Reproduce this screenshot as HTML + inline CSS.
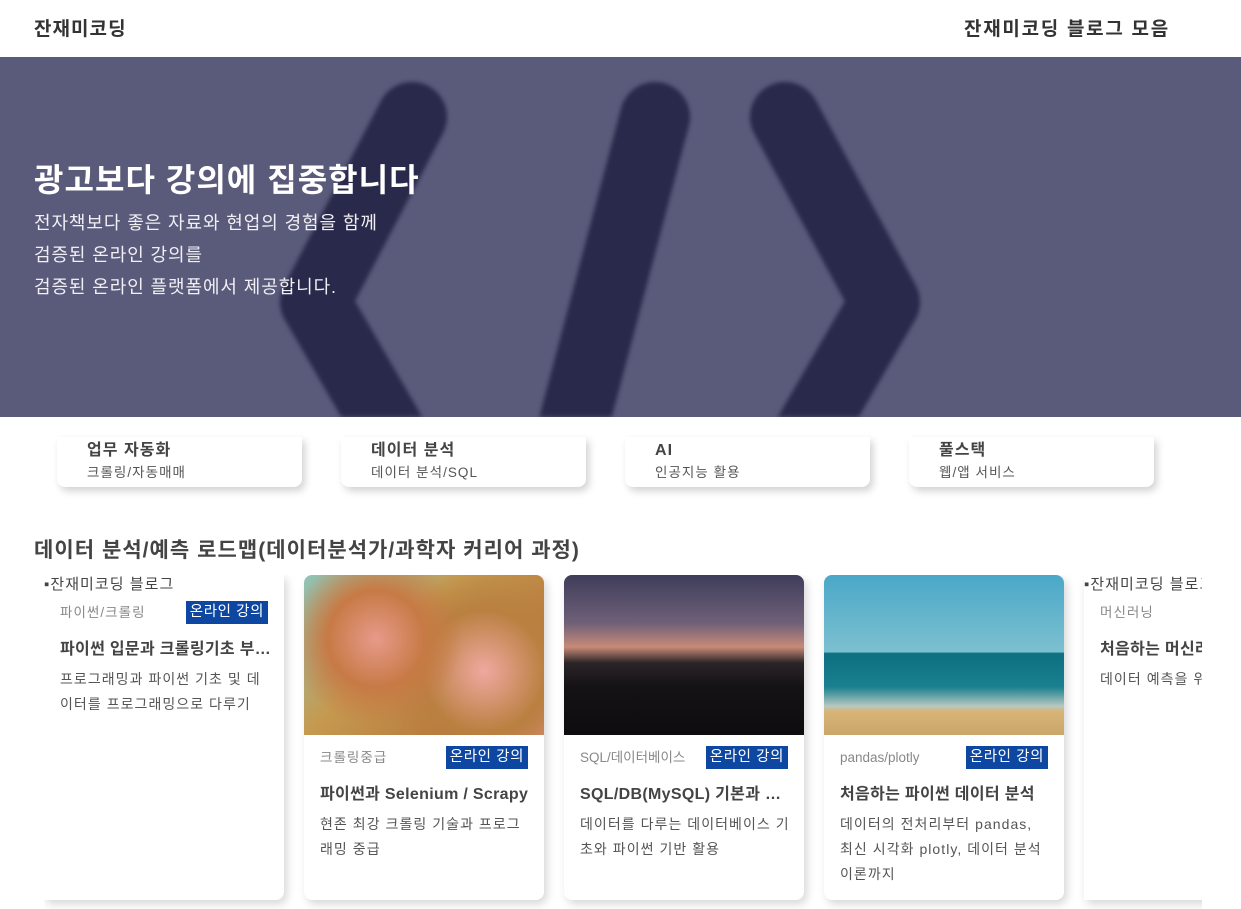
<!DOCTYPE html>
<html><head><meta charset="utf-8">
<style>
*{margin:0;padding:0;box-sizing:border-box}
body{width:1241px;height:909px;overflow:hidden;background:#fff;font-family:"Liberation Sans","Noto Sans CJK KR",sans-serif;color:#333;letter-spacing:0.065em}
.top{height:57px;position:relative}
.top .l{position:absolute;left:34px;top:14px;font-size:19px;font-weight:bold;color:#333}
.top .r{position:absolute;left:964px;top:14px;font-size:19px;font-weight:bold;color:#333;letter-spacing:0.09em}
.hero{position:absolute;top:57px;left:0;width:1241px;height:360px;background:#5a5a7b;overflow:hidden}
.hero svg{filter:blur(2px)}
.hero h1{position:absolute;left:34px;top:98px;font-size:32px;color:#fff;font-weight:bold}
.hero p{position:absolute;left:34px;top:150px;font-size:18px;color:#f0f0f4;line-height:32px;letter-spacing:0.05em}
.cat{position:absolute;top:437px;width:245px;height:50px;background:#fff;border-radius:0 0 8px 8px;box-shadow:3px 4px 8px rgba(0,0,0,.18)}
.cat b{position:absolute;left:30px;top:3px;font-size:16px;color:#444;line-height:22px}
.cat span{position:absolute;left:30px;top:26px;font-size:13.5px;color:#555;line-height:20px}
h2{position:absolute;left:34px;top:534px;font-size:21px;color:#444;font-weight:bold}
.wrap{position:absolute;left:44px;top:575px;width:1158px;height:334px;overflow:hidden}
.card{position:absolute;top:0;width:240px;height:325px;background:#fff;border-radius:8px;box-shadow:3px 4px 9px rgba(0,0,0,.16);overflow:hidden}
.img{height:160px}
.alt{height:20px;font-size:15px;color:#444;line-height:20px}
.meta{position:absolute;left:16px;font-size:13.5px;color:#888;line-height:20px}
.badge{position:absolute;right:16px;background:#0d47a1;color:#fff;font-size:14.5px;padding:0 4px;height:23px;line-height:23px;letter-spacing:0.04em}
.t{position:absolute;left:16px;font-size:16px;font-weight:bold;color:#444;white-space:nowrap;width:212px;overflow:hidden;text-overflow:ellipsis;line-height:22px;letter-spacing:0.02em}
.d{position:absolute;left:16px;width:210px;font-size:14px;color:#555;line-height:25px}
</style></head><body>
<div class="top"><div class="l">잔재미코딩</div><div class="r">잔재미코딩 블로그 모음</div></div>
<div class="hero">
<svg width="1241" height="360" style="position:absolute;left:0;top:0">
<g stroke="#29294b" stroke-width="70" stroke-linecap="round" stroke-linejoin="round" fill="none">
<polyline points="412,60 315,245 405,400"/>
<line x1="655" y1="60" x2="565" y2="400"/>
<polyline points="785,60 885,245 795,400"/>
</g></svg>
<h1>광고보다 강의에 집중합니다</h1>
<p>전자책보다 좋은 자료와 현업의 경험을 함께<br>검증된 온라인 강의를<br>검증된 온라인 플랫폼에서 제공합니다.</p>
</div>
<div class="cat" style="left:57px"><b>업무 자동화</b><span>크롤링/자동매매</span></div>
<div class="cat" style="left:341px"><b>데이터 분석</b><span>데이터 분석/SQL</span></div>
<div class="cat" style="left:625px"><b>AI</b><span>인공지능 활용</span></div>
<div class="cat" style="left:909px"><b>풀스택</b><span>웹/앱 서비스</span></div>
<h2>데이터 분석/예측 로드맵(데이터분석가/과학자 커리어 과정)</h2>
<div class="wrap">
<div class="card" style="left:0;border-radius:0 0 8px 0">
<div class="alt">▪잔재미코딩 블로그</div>
<div class="meta" style="top:28px">파이썬/크롤링</div><div class="badge" style="top:26px">온라인 강의</div>
<div class="t" style="top:64px">파이썬 입문과 크롤링기초 부트캠프</div>
<div class="d" style="top:92px">프로그래밍과 파이썬 기초 및 데이터를 프로그래밍으로 다루기</div>
</div>
<div class="card" style="left:260px">
<div class="img" style="background:radial-gradient(circle at 30% 40%,#e79a8a 0,#c77a45 25%,transparent 45%),radial-gradient(circle at 75% 60%,#f0a8a0 0,#b98040 30%,transparent 50%),linear-gradient(135deg,#8fc4b8,#c59a50 40%,#b6753a 80%,#d48a70)"></div>
<div class="meta" style="top:173px">크롤링중급</div><div class="badge" style="top:171px">온라인 강의</div>
<div class="t" style="top:209px">파이썬과 Selenium / Scrapy</div>
<div class="d" style="top:237px">현존 최강 크롤링 기술과 프로그래밍 중급</div>
</div>
<div class="card" style="left:520px">
<div class="img" style="background:linear-gradient(180deg,#3e3d5a 0,#6f6078 30%,#c88a78 45%,#2a2428 55%,#141214 70%,#0e0c0e 100%)"></div>
<div class="meta" style="top:173px;letter-spacing:0">SQL/데이터베이스</div><div class="badge" style="top:171px">온라인 강의</div>
<div class="t" style="top:209px">SQL/DB(MySQL) 기본과 활용</div>
<div class="d" style="top:237px">데이터를 다루는 데이터베이스 기초와 파이썬 기반 활용</div>
</div>
<div class="card" style="left:780px">
<div class="img" style="background:linear-gradient(180deg,#4aa8c8 0,#7cc0cf 48%,#0d6f80 49%,#1a8090 70%,#b8c8c0 82%,#d8b478 85%,#c9a66a 100%)"></div>
<div class="meta" style="top:173px;letter-spacing:0">pandas/plotly</div><div class="badge" style="top:171px">온라인 강의</div>
<div class="t" style="top:209px">처음하는 파이썬 데이터 분석</div>
<div class="d" style="top:237px">데이터의 전처리부터 pandas, 최신 시각화 plotly, 데이터 분석 이론까지</div>
</div>
<div class="card" style="left:1040px;border-radius:0">
<div class="alt">▪잔재미코딩 블로그</div>
<div class="meta" style="top:28px">머신러닝</div>
<div class="t" style="top:64px">처음하는 머신러닝과 딥러닝</div>
<div class="d" style="top:92px">데이터 예측을 위한 통계 기본</div>
</div>
</div>
</body></html>
